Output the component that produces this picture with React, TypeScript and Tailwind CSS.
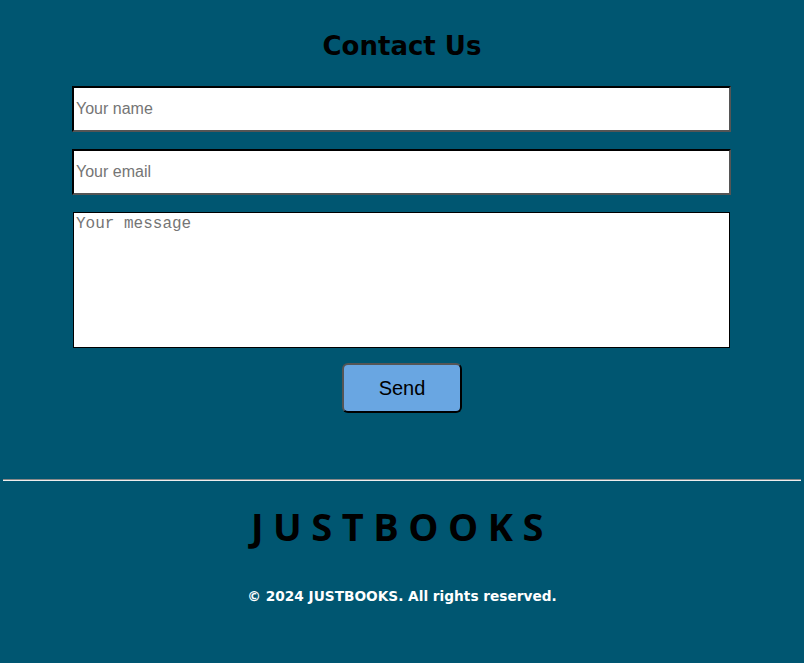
export default function App() {
  return (
    <div className="min-h-[663px] w-full bg-[#005671] pt-[16px] font-['DejaVu_Sans',sans-serif]">
      <div className="flex flex-col items-center">
        <h1 className="text-[26px] font-bold leading-[60px] text-black">Contact Us</h1>
        <div className="mt-[10px] flex w-full flex-col items-start pl-[72px] font-['Liberation_Sans',Arial,sans-serif]">
          <input
            placeholder="Your name"
            className="h-[46px] w-[659px] border-2 border-t-black border-l-black border-r-[#555] border-b-[#555] bg-white px-[2px] text-[16px] text-black placeholder:text-[#757575] outline-none"
          />
          <input
            placeholder="Your email"
            className="mt-[17px] h-[46px] w-[659px] border-2 border-t-black border-l-black border-r-[#555] border-b-[#555] bg-white px-[2px] text-[16px] text-black placeholder:text-[#757575] outline-none"
          />
          <textarea
            placeholder="Your message"
            className="ml-[1px] mt-[17px] h-[136px] w-[657px] resize-none border border-black bg-white px-[2px] py-[1px] font-['Liberation_Mono','Courier_New',monospace] text-[16px] leading-[20px] text-black placeholder:text-[#757575] outline-none"
          />
        </div>
        <button className="mt-[15px] h-[50px] w-[120px] rounded-[6px] border-2 border-t-[#555] border-l-[#555] border-r-black border-b-black bg-[#69a6e2] font-['Liberation_Sans',Arial,sans-serif] text-[20px] text-black">
          Send
        </button>
      </div>
      <div className="mx-[3px] mt-[66px] h-[2px] border-t border-[#888] bg-[#eee]" />
      <div className="flex flex-col items-center">
        <div className="mt-[21px] font-['Open_Sans',sans-serif] text-[38px] font-bold leading-[48px] tracking-[9.5px] text-black">JUSTBOOKS</div>
        <div className="mt-[36px] text-[13.7px] font-bold text-white">© 2024 JUSTBOOKS. All rights reserved.</div>
      </div>
    </div>
  );
}
